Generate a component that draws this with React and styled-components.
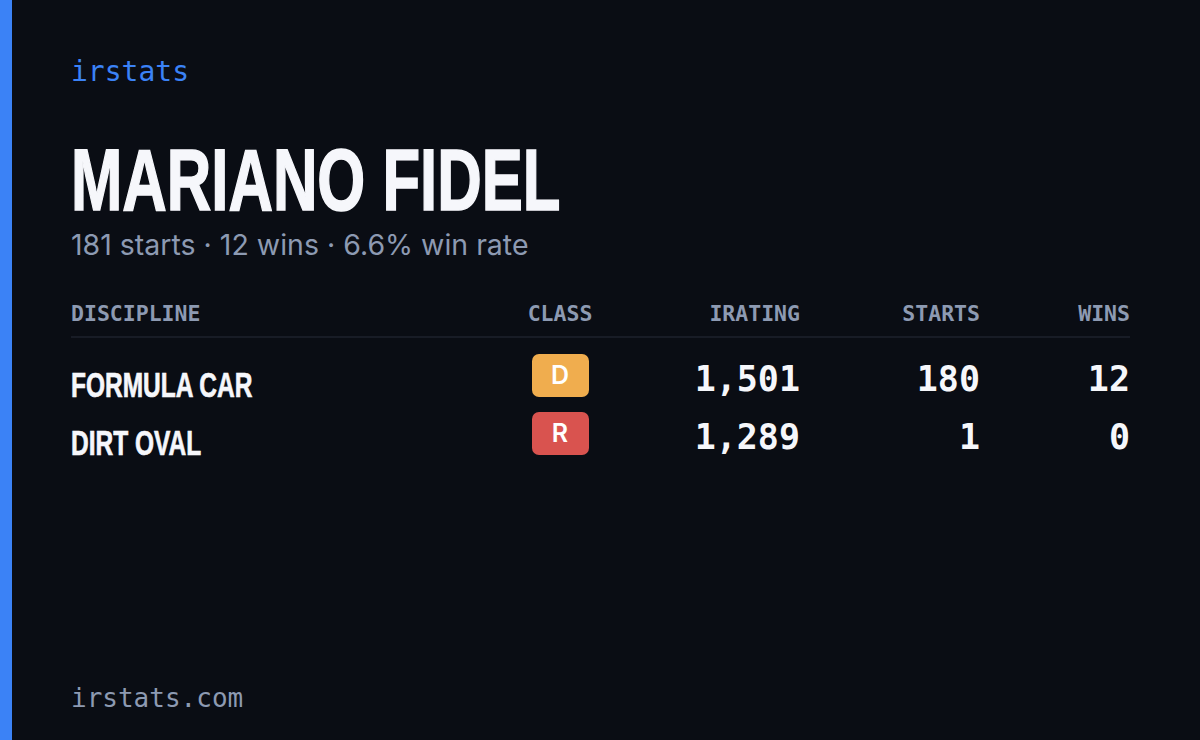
import { Fragment } from 'react';
import styled, { createGlobalStyle } from 'styled-components';

const GlobalStyle = createGlobalStyle`
  html, body {
    margin: 0;
    padding: 0;
    background: #0a0d14;
  }
`;

const MONO = `"DejaVu Sans Mono", "Liberation Mono", monospace`;
// no condensed face installed: Liberation Sans Bold squeezed horizontally
const CONDENSED = `"Liberation Sans", Arial, sans-serif`;

const Card = styled.div`
  width: 1200px;
  height: 740px;
  box-sizing: border-box;
  background: #0a0d14;
  border-left: 12px solid #3b82f6;
  padding: 52px 70px 22px 59px;
  display: flex;
  flex-direction: column;
`;

const Brand = styled.div`
  font-family: ${MONO};
  font-size: 28px;
  color: #3b82f6;
  line-height: 40px;
`;

const Name = styled.h1`
  margin: 49px 0 0;
  font-family: ${CONDENSED};
  font-weight: 700;
  font-size: 88px;
  line-height: 78px;
  color: #f6f7fb;
  -webkit-text-stroke: 1.6px #f6f7fb;
  transform: scaleX(0.7);
  transform-origin: left center;
  white-space: nowrap;
`;

const Summary = styled.div`
  margin-top: 8px;
  font-family: Inter, "Noto Sans", sans-serif;
  font-size: 28.5px;
  color: #8d9ab2;
  line-height: 36px;
`;

const Table = styled.div`
  margin-top: 39px;
  display: grid;
  grid-template-columns: 1fr 80px 200px 180px 150px;
`;

const HeadCell = styled.div`
  font-family: ${MONO};
  font-weight: 700;
  font-size: 21.5px;
  color: #8d9ab2;
  text-align: ${(p) => p.$align || 'left'};
  padding-bottom: 10px;
  margin-bottom: 8px;
  border-bottom: 2px solid #181c26;
  line-height: 24px;
`;

const Discipline = styled.div`
  font-family: ${CONDENSED};
  font-weight: 700;
  font-size: 35px;
  line-height: 35px;
  color: #f6f7fb;
  -webkit-text-stroke: 0.7px #f6f7fb;
  height: 58px;
  display: flex;
  align-items: flex-end;
  padding-bottom: 2px;
  box-sizing: border-box;
  transform: scaleX(0.7);
  transform-origin: left center;
  white-space: nowrap;
`;

const ClassCell = styled.div`
  display: flex;
  justify-content: center;
  align-items: center;
  height: 58px;
`;

const Badge = styled.div`
  width: 57px;
  height: 43px;
  border-radius: 7px;
  background: ${(p) => p.$color};
  color: #fff;
  font-family: Inter, "Noto Sans", sans-serif;
  font-weight: 600;
  font-size: 25px;
  display: flex;
  align-items: center;
  justify-content: center;
`;

const Num = styled.div`
  font-family: ${MONO};
  font-weight: 700;
  font-size: 35px;
  color: #f6f7fb;
  height: 58px;
  box-sizing: border-box;
  padding-top: 8px;
  display: flex;
  align-items: center;
  justify-content: flex-end;
`;

const Footer = styled.div`
  margin-top: auto;
  font-family: ${MONO};
  font-size: 26px;
  color: #8d9ab2;
  line-height: 40px;
`;

const rows = [
  { name: 'FORMULA CAR', cls: 'D', color: '#f0ad4e', irating: '1,501', starts: '180', wins: '12' },
  { name: 'DIRT OVAL', cls: 'R', color: '#d9534f', irating: '1,289', starts: '1', wins: '0' },
];

export default function App() {
  return (
    <>
      <GlobalStyle />
      <Card>
        <Brand>irstats</Brand>
        <Name>MARIANO FIDEL</Name>
        <Summary>181 starts · 12 wins · 6.6% win rate</Summary>
        <Table>
          <HeadCell>DISCIPLINE</HeadCell>
          <HeadCell $align="center">CLASS</HeadCell>
          <HeadCell $align="right">IRATING</HeadCell>
          <HeadCell $align="right">STARTS</HeadCell>
          <HeadCell $align="right">WINS</HeadCell>
          {rows.map((r) => (
            <Fragment key={r.name}>
              <Discipline>{r.name}</Discipline>
              <ClassCell>
                <Badge $color={r.color}>{r.cls}</Badge>
              </ClassCell>
              <Num>{r.irating}</Num>
              <Num>{r.starts}</Num>
              <Num>{r.wins}</Num>
            </Fragment>
          ))}
        </Table>
        <Footer>irstats.com</Footer>
      </Card>
    </>
  );
}
